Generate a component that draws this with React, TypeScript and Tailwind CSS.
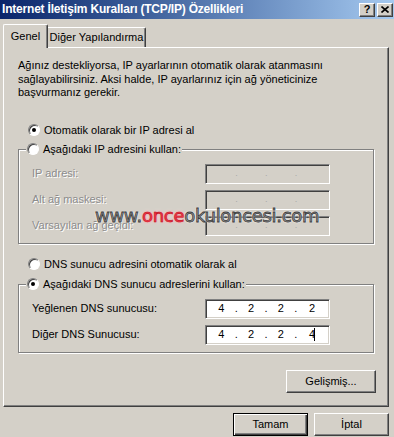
import React from 'react';

const raised =
  "border border-t-white border-l-white border-r-[#404040] border-b-[#404040] shadow-[inset_-1px_-1px_0_#808080] bg-[#d4d0c8]";
const sunken =
  "border border-t-[#808080] border-l-[#808080] border-r-white border-b-white shadow-[inset_1px_1px_0_#404040,inset_-1px_-1px_0_#d4d0c8]";
const etched =
  "border border-[#808080] shadow-[inset_1px_1px_0_#fff,1px_1px_0_#fff]";
const disabledText = "text-[#8c8c8c] [text-shadow:1px_1px_0_#fff]";

type RadioProps = {checked?: boolean, label: string}

const Radio = ({checked, label}: RadioProps) => (
    <div className="flex flex-row items-center h-[13px]">
        <div
            className="w-[12px] h-[12px] rounded-full bg-white border border-t-[#808080] border-l-[#808080] border-r-white border-b-white shadow-[inset_1px_1px_0_#404040] flex items-center justify-center">
            {checked && <div className="w-[4px] h-[4px] rounded-full bg-black"/>}
        </div>
        <span className="ml-[4px] whitespace-nowrap">{label}</span>
    </div>
);

type IpFieldProps = {values?: string[], disabled?: boolean, cursor?: boolean}

const IpField = ({values, disabled, cursor}: IpFieldProps) => (
    <div className={`w-[125px] h-[20px] flex flex-row px-[2px] ${sunken} ${disabled ? "bg-[#d4d0c8]" : "bg-white"}`}>
        {[0, 1, 2, 3].map(i => (
            <div key={i} className="w-[30px] h-full flex flex-row items-center">
                <span className="flex-1 text-center">
                    {values ? values[i] : ""}
                    {cursor && i === 3 && <span className="inline-block w-[1px] h-[13px] bg-black align-middle -ml-[1px]"/>}
                </span>
                {i < 3 && (
                    <span className={disabled ? "text-[#a8a8a8] text-[9px]" : "text-black"}>.</span>
                )}
            </div>
        ))}
    </div>
);

type RowProps = {label: string, disabled?: boolean, values?: string[], cursor?: boolean}

const FieldRow = ({label, disabled, values, cursor}: RowProps) => (
    <div className="flex flex-row items-center h-[20px]">
        <span className={`w-[173px] whitespace-nowrap ${disabled ? disabledText : ""}`}>{label}</span>
        <IpField values={values} disabled={disabled} cursor={cursor}/>
    </div>
);

const App = () => {
    return (
        <div className="relative w-[394px] h-[437px] bg-[#d4d0c8] overflow-hidden font-['Liberation_Sans',Arial,sans-serif] text-[11px] leading-[13px] text-black">
            {/* title bar */}
            <div className="h-[19px] bg-linear-to-r from-[#0a246a] to-[#a6caf0] flex flex-row items-center pl-[2px] pr-[1px]">
                <span className="text-white font-bold text-[12px] tracking-[-0.2px] whitespace-nowrap flex-1">
                    Internet İletişim Kuralları (TCP/IP) Özellikleri
                </span>
                <div className={`w-[16px] h-[14px] ${raised} flex items-center justify-center font-bold text-[11px] leading-none`}>?</div>
                <div className={`w-[16px] h-[14px] ml-[2px] ${raised} flex items-center justify-center`}>
                    <svg width="8" height="7" viewBox="0 0 8 7">
                        <path d="M0.5 0.5 L7.5 6.5 M7.5 0.5 L0.5 6.5" stroke="#000" strokeWidth="1.6"/>
                    </svg>
                </div>
            </div>

            {/* tabs */}
            <div className="flex flex-row items-end mt-[5px] ml-[3px] h-[23px]">
                <div className="relative z-10 w-[45px] h-[24px] -mb-[1px] bg-[#d4d0c8] border-l border-t border-white border-r border-r-[#404040] rounded-tl-[2px] rounded-tr-[2px] shadow-[inset_-1px_0_0_#808080] flex items-start justify-center pt-[5px]">
                    Genel
                </div>
                <div className="w-[98px] h-[20px] border-t border-white border-r border-r-[#404040] rounded-tr-[2px] shadow-[inset_-1px_0_0_#808080] flex items-center justify-center pb-[1px]">
                    Diğer Yapılandırma
                </div>
            </div>

            {/* panel */}
            <div className="ml-[3px] w-[386px] h-[360px] border border-t-white border-l-white border-r-[#404040] border-b-[#404040] shadow-[inset_-1px_-1px_0_#808080] flex flex-col">
                <p className="pt-[11px] pl-[14px] leading-[13.5px]">
                    Ağınız destekliyorsa, IP ayarlarının otomatik olarak atanmasını<br/>
                    sağlayabilirsiniz. Aksi halde, IP ayarlarınız için ağ yöneticinize<br/>
                    başvurmanız gerekir.
                </p>

                <div className="mt-[24px] ml-[24px]">
                    <Radio checked label="Otomatik olarak bir IP adresi al"/>
                </div>

                <fieldset className={`mt-[6px] ml-[14px] w-[356px] pb-[7px] ${etched}`}>
                    <legend className="ml-[7px] px-[1px] bg-[#d4d0c8]">
                        <Radio label="Aşağıdaki IP adresini kullan:"/>
                    </legend>
                    <div className="flex flex-col gap-[6px] mt-[8px] pl-[13px]">
                        <FieldRow label="IP adresi:" disabled/>
                        <FieldRow label="Alt ağ maskesi:" disabled/>
                        <FieldRow label="Varsayılan ağ geçidi:" disabled/>
                    </div>
                </fieldset>

                <div className="mt-[14px] ml-[24px]">
                    <Radio label="DNS sunucu adresini otomatik olarak al"/>
                </div>

                <fieldset className={`mt-[7px] ml-[14px] w-[356px] pb-[7px] ${etched}`}>
                    <legend className="ml-[7px] px-[1px] bg-[#d4d0c8]">
                        <Radio checked label="Aşağıdaki DNS sunucu adreslerini kullan:"/>
                    </legend>
                    <div className="flex flex-col gap-[6px] mt-[8px] pl-[13px]">
                        <FieldRow label="Yeğlenen DNS sunucusu:" values={["4", "2", "2", "2"]}/>
                        <FieldRow label="Diğer DNS Sunucusu:" values={["4", "2", "2", "4"]} cursor/>
                    </div>
                </fieldset>

                <div className="flex flex-row justify-end mt-[17px] pr-[12px]">
                    <button className={`w-[90px] h-[23px] ${raised}`}>Gelişmiş...</button>
                </div>
            </div>

            {/* dialog buttons */}
            <div className="flex flex-row justify-end gap-[6px] mt-[6px] pr-[5px]">
                <button className="w-[75px] h-[23px] bg-[#d4d0c8] border border-black shadow-[inset_1px_1px_0_#fff,inset_-1px_-1px_0_#404040,inset_-2px_-2px_0_#808080]">
                    Tamam
                </button>
                <button className={`w-[75px] h-[23px] ${raised}`}>İptal</button>
            </div>

            {/* watermark */}
            <div className="absolute left-[95px] top-[205px] text-[18px] leading-[22px] tracking-[-0.3px] whitespace-nowrap font-['DejaVu_Sans',sans-serif] [text-shadow:0_0_2px_#fff,0_0_2px_#fff]">
                <span className="text-[#a0a0a0] [-webkit-text-stroke:0.8px_#3a3a3a]">www.</span>
                <span className="text-[#f23a4a] [-webkit-text-stroke:0.6px_#c01020] [text-shadow:0_0_3px_#ff6070,0_0_4px_#fff]">once</span>
                <span className="text-[#a0a0a0] [-webkit-text-stroke:0.8px_#3a3a3a]">okuloncesi.com</span>
            </div>
        </div>
    );
};

export default App;
